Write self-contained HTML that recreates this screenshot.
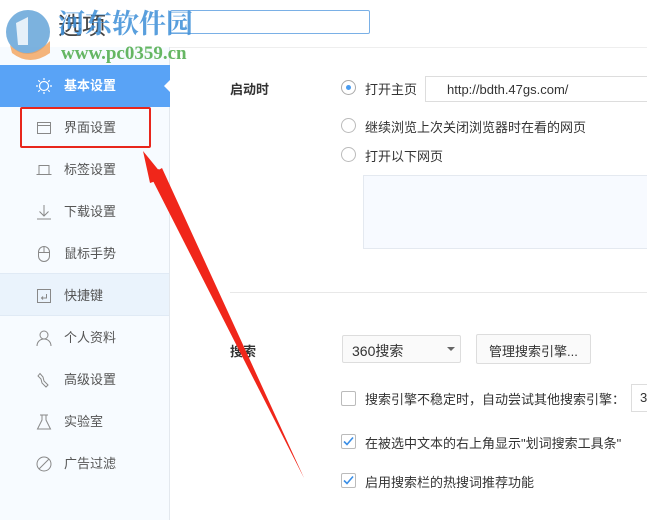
<!DOCTYPE html>
<html><head><meta charset="utf-8"><style>
*{margin:0;padding:0;box-sizing:border-box}
body{width:647px;height:520px;overflow:hidden;background:#fff;font-family:"Liberation Sans","Noto Sans CJK SC",sans-serif;font-size:13px;color:#333;position:relative}
.a{position:absolute}
.side{left:0;top:47px;width:170px;height:473px;background:#f7fbff;border-right:1px solid #e3e8ee}
.item{position:absolute;left:0;width:169px;height:42px;line-height:42px;padding-left:64px;color:#555}
.item svg{position:absolute;left:36px;top:13px}
.radio{width:15px;height:15px;border:1px solid #bbb;border-radius:50%;background:#fff}
.cb{width:15px;height:15px;border:1px solid #bbb;border-radius:2px;background:#fff}
.wm{z-index:5}
</style></head><body>
<div class="a" style="left:0;top:47px;width:647px;height:1px;background:#eee"></div>
<!-- sidebar -->
<div class="a side"></div>
<div class="a" style="left:0;top:273px;width:169px;height:43px;background:#eaf3fc;border-top:1px solid #e0eaf5;border-bottom:1px solid #e0eaf5"></div>
<div class="a" style="left:0;top:65px;width:170px;height:42px;background:#59a3f6"></div>
<div class="a" style="left:164px;top:80px;width:0;height:0;border-top:6px solid transparent;border-bottom:6px solid transparent;border-right:6px solid #fff"></div>
<div class="item" style="top:65px;color:#fff;font-weight:bold"><svg width="16" height="16" fill="none" stroke="#fff" stroke-width="1.2"><circle cx="8" cy="8" r="4.5"/><path d="M8 0v2M8 14v2M0 8h2M14 8h2M2.3 2.3l1.5 1.5M12.2 12.2l1.5 1.5M2.3 13.7l1.5-1.5M12.2 3.8l1.5-1.5"/></svg>基本设置</div>
<div class="item" style="top:107px"><svg width="16" height="16" fill="none" stroke="#888"><rect x="1.5" y="2.5" width="13" height="11"/><path d="M1.5 5.5h13"/></svg>界面设置</div>
<div class="item" style="top:149px"><svg width="16" height="16" fill="none" stroke="#888"><path d="M3 3.5h10v9H3zM0.5 12.5h15"/></svg>标签设置</div>
<div class="item" style="top:191px"><svg width="16" height="16" fill="none" stroke="#888"><path d="M8 1v11M3.5 7.5L8 12l4.5-4.5M1 15h14"/></svg>下载设置</div>
<div class="item" style="top:233px"><svg width="16" height="16" fill="none" stroke="#888"><rect x="2.5" y="0.5" width="11" height="15" rx="5.5"/><path d="M8 0.5v6M2.5 6.5h11"/></svg>鼠标手势</div>
<div class="item" style="top:275px"><svg width="16" height="16" fill="none" stroke="#888"><rect x="1.5" y="1.5" width="13" height="13"/><path d="M10.5 6v4h-5M7 8.5l-1.5 1.5 1.5 1.5"/></svg>快捷键</div>
<div class="item" style="top:317px"><svg width="16" height="16" fill="none" stroke="#888"><circle cx="8" cy="5" r="4"/><path d="M1 16c0-4 3-7 7-7s7 3 7 7"/></svg>个人资料</div>
<div class="item" style="top:359px"><svg width="16" height="16" fill="none" stroke="#888"><path d="M4 1.5L2 4l3 3 1 4 4 4 2-2-4-4 -1-4z"/></svg>高级设置</div>
<div class="item" style="top:401px"><svg width="16" height="16" fill="none" stroke="#888"><path d="M4 1h8M6 1v5L1.5 15h13L10 6V1"/></svg>实验室</div>
<div class="item" style="top:443px"><svg width="16" height="16" fill="none" stroke="#888"><circle cx="8" cy="8" r="7"/><path d="M3 13L13 3"/></svg>广告过滤</div>
<div class="a" style="left:20px;top:107px;width:131px;height:41px;border:2px solid #e8261c;border-radius:2px"></div>
<!-- header -->
<svg class="a wm" style="left:0;top:5px" width="60" height="58"><circle cx="28" cy="27" r="22" fill="#5b9fd6" opacity=".8"/><path d="M10 40 Q28 58 50 36 L50 48 Q30 62 12 48Z" fill="#f3a25a" opacity=".8"/><path d="M16 18 L28 12 L28 40 L18 40Z" fill="#fff" opacity=".8"/></svg>
<div class="a wm" style="left:58px;top:6px;font-size:24px;color:#444">选项</div>
<div class="a wm" style="left:58px;top:2px;font-size:27px;font-weight:bold;color:#3d8fd8;opacity:.85;font-family:'Noto Serif CJK SC',serif">河东软件园</div>
<div class="a wm" style="left:61px;top:43px;font-size:19px;font-weight:bold;color:#4caa48;font-family:'Liberation Serif',serif;opacity:.85">www.pc0359.cn</div>
<div class="a" style="left:170px;top:10px;width:200px;height:24px;border:1px solid #7ab0e6;border-radius:2px"></div>
<!-- content -->
<div class="a" style="left:230px;top:79px;font-weight:bold">启动时</div>
<div class="a radio" style="left:341px;top:80px;border-color:#aaa"><div style="width:5px;height:5px;margin:4px;border-radius:50%;background:#4a9cf0"></div></div>
<div class="a" style="left:365px;top:79px">打开主页</div>
<div class="a" style="left:425px;top:76px;width:230px;height:26px;border:1px solid #ddd;padding:5px 0 0 21px">http://bdth.47gs.com/</div>
<div class="a radio" style="left:341px;top:118px"></div>
<div class="a" style="left:365px;top:117px">继续浏览上次关闭浏览器时在看的网页</div>
<div class="a radio" style="left:341px;top:147px"></div>
<div class="a" style="left:365px;top:146px">打开以下网页</div>
<div class="a" style="left:363px;top:175px;width:290px;height:74px;background:#f7faff;border:1px solid #e4e9f0"></div>
<div class="a" style="left:230px;top:292px;width:417px;height:1px;background:#e8e8e8"></div>
<div class="a" style="left:230px;top:341px;font-weight:bold">搜索</div>
<div class="a" style="left:342px;top:335px;width:119px;height:28px;border:1px solid #ddd;border-radius:2px;background:#fafafa;padding:5px 0 0 9px;font-size:14px">360搜索</div>
<div class="a" style="left:447px;top:347px;border-left:4px solid transparent;border-right:4px solid transparent;border-top:4px solid #666"></div>
<div class="a" style="left:476px;top:334px;width:115px;height:30px;border:1px solid #ddd;border-radius:2px;background:#fafafa;padding:6px 0 0 12px">管理搜索引擎...</div>
<div class="a cb" style="left:341px;top:391px"></div>
<div class="a" style="left:365px;top:389px">搜索引擎不稳定时，自动尝试其他搜索引擎：</div>
<div class="a" style="left:631px;top:384px;width:30px;height:28px;border:1px solid #ddd;padding:5px 0 0 8px">3</div>
<div class="a cb" style="left:341px;top:434px"><svg width="13" height="13"><path d="M2 6.5l3 3 6-7" stroke="#3a8ee6" stroke-width="1.6" fill="none"/></svg></div>
<div class="a" style="left:365px;top:433px">在被选中文本的右上角显示"划词搜索工具条"</div>
<div class="a cb" style="left:341px;top:473px"><svg width="13" height="13"><path d="M2 6.5l3 3 6-7" stroke="#3a8ee6" stroke-width="1.6" fill="none"/></svg></div>
<div class="a" style="left:365px;top:472px">启用搜索栏的热搜词推荐功能</div>
<!-- arrow -->
<svg class="a" style="left:0;top:0;z-index:6" width="647" height="520"><path d="M304 478 L153 172 L159 169 Z" fill="#f0261a"/><path d="M143 151 L165 178 L150 183 Z" fill="#f0261a"/><path d="M304 478 L150 175 L162 168Z" fill="#f0261a"/></svg>
</body></html>
